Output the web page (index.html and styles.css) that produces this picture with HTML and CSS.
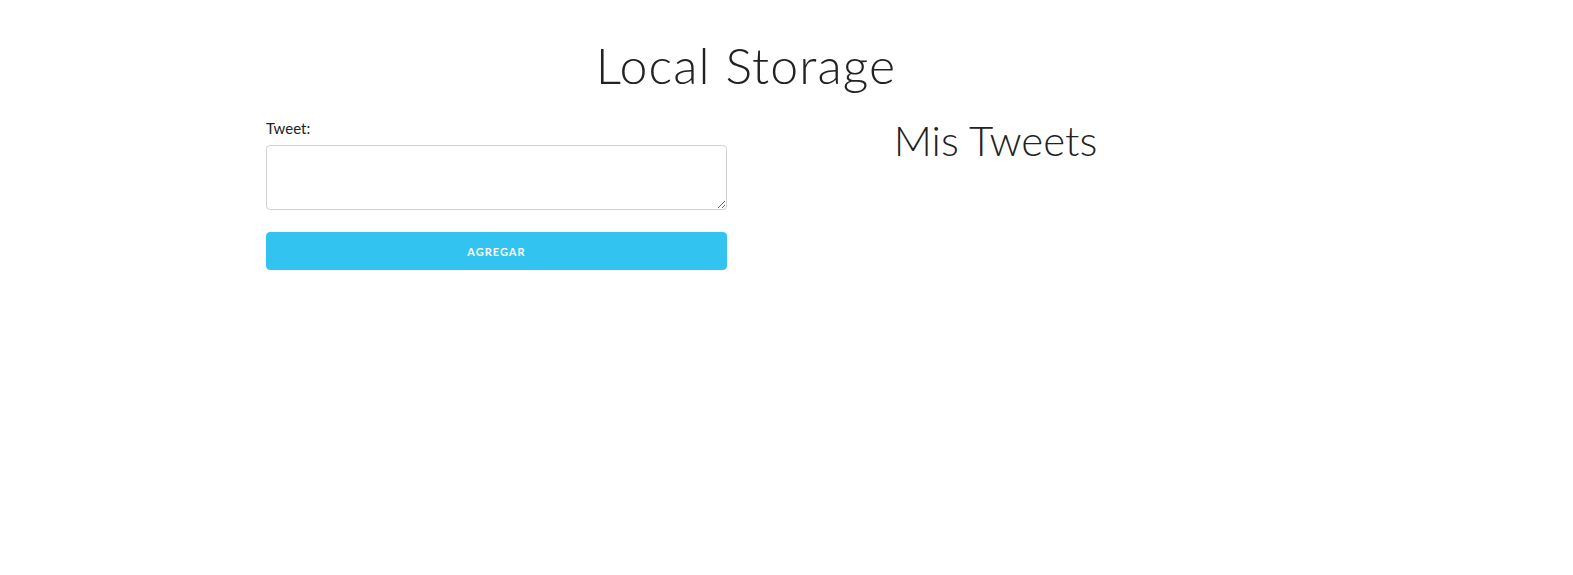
FILE: index.html
```html
<!DOCTYPE html>
<html lang="es">
<head>
<meta charset="utf-8">
<title>Local Storage</title>
<link rel="stylesheet" href="styles.css">
</head>
<body>
<div class="container">
  <h1 class="title">Local Storage</h1>
  <div class="row">
    <div class="column">
      <form class="form">
        <label class="label" for="tweet">Tweet:</label>
        <textarea id="tweet" class="textarea"></textarea>
        <button type="button" class="button-primary">Agregar</button>
      </form>
    </div>
    <div class="column">
      <h2 class="subtitle">Mis Tweets</h2>
      <div class="list"></div>
    </div>
  </div>
</div>
</body>
</html>
```

FILE: styles.css
```css
html { font-size: 62.5%; }
body {
  margin: 0;
  font-family: "Lato", "Liberation Sans", sans-serif;
  font-size: 1.5rem;
  line-height: 1.6;
  color: #222;
  background: #fff;
}
.container {
  width: 960px;
  margin-left: 266px;
  padding-top: 35px;
}
.title {
  margin: 0 0 21px;
  font-size: 50px;
  line-height: 1.2;
  font-weight: 300;
  text-align: center;
  letter-spacing: 1.1px;
}
.row {
  display: flex;
  gap: 38.4px;
}
.column {
  width: 460.8px;
}
.form {
  display: flex;
  flex-direction: column;
}
.label {
  display: block;
  margin-bottom: 5px;
  font-weight: 400;
}
.textarea {
  box-sizing: border-box;
  width: 100%;
  height: 65px;
  min-height: 65px;
  padding: 6px 10px;
  border: 1px solid #d1d1d1;
  border-radius: 4px;
  margin: 0 0 22px;
  font-family: inherit;
}
.button-primary {
  box-sizing: border-box;
  height: 38px;
  width: 100%;
  padding: 0 30px;
  border: 1px solid #33c3f0;
  border-radius: 4px;
  background: #33c3f0;
  color: #fff;
  font-family: inherit;
  font-size: 11px;
  font-weight: 700;
  letter-spacing: 1px;
  text-transform: uppercase;
}
.subtitle {
  margin: -2px 0 0;
  font-size: 42px;
  line-height: 1.25;
  font-weight: 300;
  text-align: center;
  letter-spacing: 0;
}
```
